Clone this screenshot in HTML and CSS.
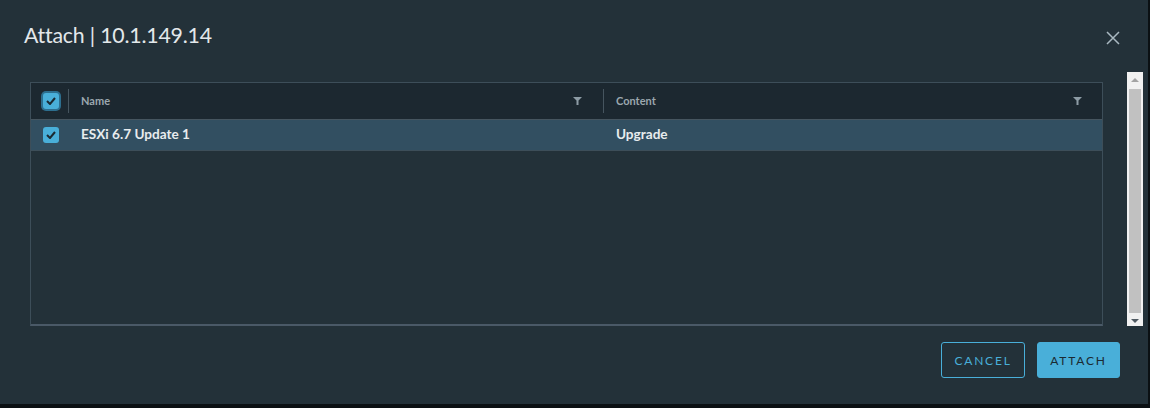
FILE: index.html
```html
<!DOCTYPE html>
<html lang="en">
<head>
  <meta charset="UTF-8">
  <title>Attach | 10.1.149.14</title>
  <link rel="stylesheet" href="styles.css">
</head>
<body>

  <div class="modal">
    <div class="modal-header">
      <h3 class="modal-title">Attach | 10.1.149.14</h3>
      <button class="close-btn" aria-label="Close">
        <svg width="14" height="14" viewBox="0 0 14 14">
          <path d="M1 1 L13 13 M13 1 L1 13" stroke="#a9b8c1" stroke-width="1.5" fill="none"/>
        </svg>
      </button>
    </div>

    <div class="modal-body">
      <div class="datagrid">
        <div class="grid-head">
          <div class="cell cell-check">
            <span class="checkbox focused">
              <svg width="10" height="8" viewBox="0 0 10 8"><path d="M1 4 L4 7 L9 1" stroke="#1b2a32" stroke-width="2" fill="none"/></svg>
            </span>
          </div>
          <div class="cell cell-name">
            <span>Name</span>
            <svg class="filter" width="9" height="8" viewBox="0 0 9 8"><path d="M0 0 H9 L5.5 3.5 V8 H3.5 V3.5 Z" fill="#8d9ca5"/></svg>
          </div>
          <div class="cell cell-content">
            <span>Content</span>
            <svg class="filter" width="9" height="8" viewBox="0 0 9 8"><path d="M0 0 H9 L5.5 3.5 V8 H3.5 V3.5 Z" fill="#8d9ca5"/></svg>
          </div>
        </div>

        <div class="grid-row selected">
          <div class="cell cell-check">
            <span class="checkbox">
              <svg width="10" height="8" viewBox="0 0 10 8"><path d="M1 4 L4 7 L9 1" stroke="#1b2a32" stroke-width="2" fill="none"/></svg>
            </span>
          </div>
          <div class="cell cell-name">ESXi 6.7 Update 1</div>
          <div class="cell cell-content">Upgrade</div>
        </div>
      </div>

      <div class="scrollbar">
        <span class="arrow-up"></span>
        <span class="thumb"></span>
        <span class="arrow-down"></span>
      </div>
    </div>

    <div class="modal-footer">
      <button class="btn btn-outline">CANCEL</button>
      <button class="btn btn-primary">ATTACH</button>
    </div>
  </div>

</body>
</html>
```

FILE: styles.css
```css
* {
  box-sizing: border-box;
  font-family: Lato, 'Noto Sans', sans-serif;
}

body {
  margin: 0;
  padding: 0;
  background-color: #0b1013;
  height: 408px;
}

.modal {
  width: 1148px;
  height: 404px;
  background-color: #233139;
  display: flex;
  flex-direction: column;
}

.modal-header {
  height: 72px;
  display: flex;
  justify-content: space-between;
  align-items: flex-start;
  padding: 0 28px 0 24px;
}

.modal-title {
  margin: 21px 0 0;
  font-size: 21.3px;
  font-weight: 400;
  line-height: 28px;
  color: #e3e8eb;
  letter-spacing: -0.2px;
}

.close-btn {
  margin-top: 31px;
  padding: 0;
  background: none;
  border: none;
  line-height: 0;
  cursor: pointer;
}

.modal-body {
  display: flex;
  height: 254px;
  padding-left: 30px;
}

.datagrid {
  margin-top: 10px;
  width: 1073px;
  height: 244px;
  border: 1px solid #3d4e59;
  border-bottom: 2px solid #4a5967;
}

.grid-head {
  display: flex;
  height: 37px;
  background-color: #1c2830;
  border-bottom: 1px solid #46555f;
}

.grid-row {
  display: flex;
  height: 31px;
  border-bottom: 1px solid #3d4e59;
}

.grid-row.selected {
  background-color: #324f61;
}

.cell {
  display: flex;
  align-items: center;
}

.grid-head .cell {
  padding-bottom: 2px;
}

.grid-row .cell {
  padding-bottom: 3px;
}

.cell-check {
  width: 38px;
  padding-left: 12px;
}

.grid-head .cell-check,
.grid-head .cell-name {
  position: relative;
}

.grid-head .cell-check::after,
.grid-head .cell-name::after {
  content: "";
  position: absolute;
  right: 0;
  top: 6px;
  bottom: 6px;
  width: 1px;
  background-color: #46555f;
}

.cell-name {
  width: 535px;
  padding-left: 12px;
  padding-right: 22px;
  justify-content: space-between;
}

.cell-content {
  flex: 1;
  padding-left: 12px;
  padding-right: 20px;
  justify-content: space-between;
}

.grid-head .cell-check,
.grid-row .cell-check {
  padding-bottom: 1px;
}

.grid-head .cell {
  font-size: 11px;
  font-weight: 700;
  color: #9ba7ae;
}

.grid-row .cell {
  font-size: 13.6px;
  font-weight: 700;
  color: #e8ecee;
}

.checkbox {
  width: 16px;
  height: 16px;
  border-radius: 3px;
  background-color: #49afd9;
  display: flex;
  align-items: center;
  justify-content: center;
}

.checkbox.focused {
  box-shadow: 0 0 0 2px #2d6f8f;
}

.filter {
  margin-top: 1px;
}

.scrollbar {
  margin-left: 24px;
  width: 16px;
  height: 254px;
  background-color: #f1f1f1;
  display: flex;
  flex-direction: column;
  align-items: center;
}

.arrow-up {
  margin-top: 6px;
  width: 0;
  height: 0;
  border-left: 4px solid transparent;
  border-right: 4px solid transparent;
  border-bottom: 4px solid #a3a3a3;
}

.thumb {
  margin-top: 7px;
  width: 12px;
  height: 224px;
  background-color: #c1c1c1;
}

.arrow-down {
  margin-top: 6px;
  width: 0;
  height: 0;
  border-left: 4px solid transparent;
  border-right: 4px solid transparent;
  border-top: 4px solid #505a62;
}

.modal-footer {
  display: flex;
  justify-content: flex-end;
  gap: 12px;
  padding: 16px 28px 0 0;
}

.btn {
  height: 36px;
  padding: 0 12px;
  font-size: 12px;
  font-weight: 400;
  letter-spacing: 1.8px;
  border-radius: 3px;
  cursor: pointer;
}

.btn-outline {
  width: 84px;
  background: transparent;
  border: 1px solid #49afd9;
  color: #49afd9;
}

.btn-primary {
  width: 83px;
  background-color: #49afd9;
  border: 1px solid #49afd9;
  color: #1b2a32;
}
```
